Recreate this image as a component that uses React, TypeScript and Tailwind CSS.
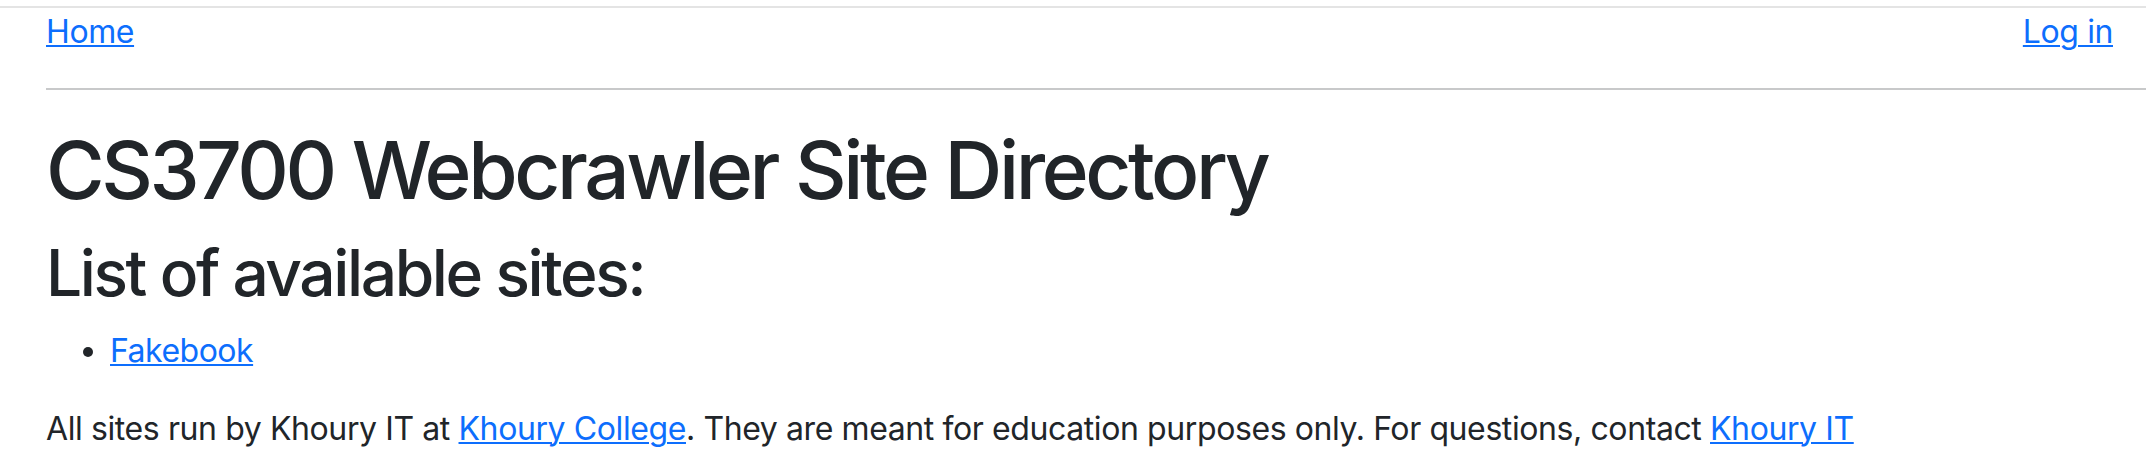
export default function App() {
  const link = 'text-[#0d6efd] underline decoration-2 underline-offset-[2px]';

  return (
    <div className="min-h-screen bg-white pt-[6px] text-[#212529] [font-family:Inter,'Noto_Sans',sans-serif]">
      <div className="border-t-2 border-[#e4e4e4] pl-[46px]">
        <nav className="flex items-center justify-between pr-[33px] text-[32px] leading-[48px] tracking-[-0.4px]">
          <a href="#" className={link}>Home</a>
          <a href="#" className={link}>Log in</a>
        </nav>
        <hr className="my-[32px] border-t-2 border-[#c8c9ca]" />

        <h1 className="mb-[16px] text-[80px] leading-[96px] font-medium tracking-[-3.4px]">
          CS3700 Webcrawler Site Directory
        </h1>
        <h2 className="mb-[16px] text-[64px] leading-[77px] font-medium tracking-[-2.4px]">
          List of available sites:
        </h2>

        <ul className="mb-[30px] list-disc pl-[64px] text-[32px] leading-[48px] tracking-[-0.5px]">
          <li>
            <a href="#" className={link}>Fakebook</a>
          </li>
        </ul>

        <p className="text-[32px] leading-[48px] tracking-[-0.4px]">
          All sites run by Khoury IT at <a href="#" className={link}>Khoury College</a>. They are meant for
          education purposes only. For questions, contact <a href="#" className={link}>Khoury IT</a>
        </p>
      </div>
    </div>
  );
}
